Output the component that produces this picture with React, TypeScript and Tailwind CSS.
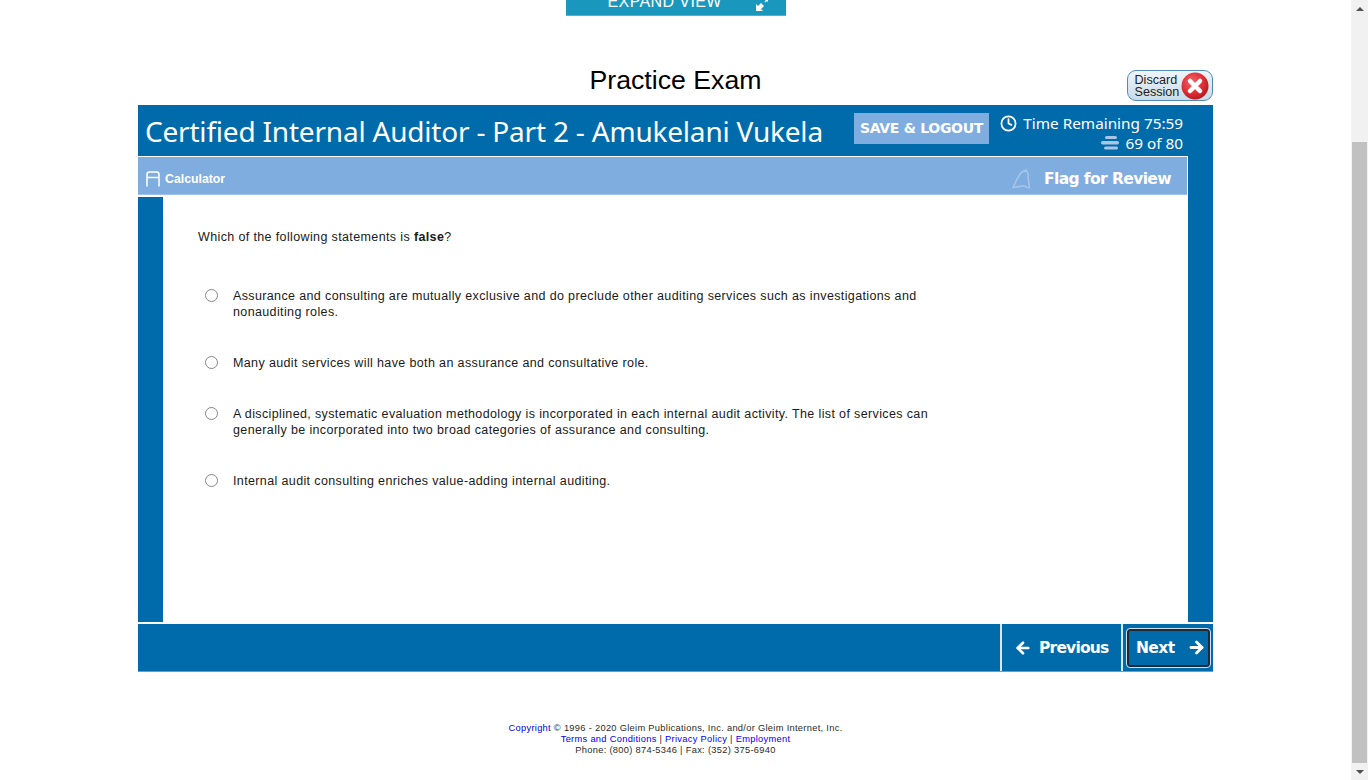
import { ArrowLeft, ArrowRight, Clock } from "lucide-react";

const options = [
  "Assurance and consulting are mutually exclusive and do preclude other auditing services such as investigations and nonauditing roles.",
  "Many audit services will have both an assurance and consultative role.",
  "A disciplined, systematic evaluation methodology is incorporated in each internal audit activity. The list of services can generally be incorporated into two broad categories of assurance and consulting.",
  "Internal audit consulting enriches value-adding internal auditing.",
];

function ExpandIcon() {
  return (
    <svg viewBox="0 0 12 12" className="h-3 w-3 text-white">
      <path d="M0 12V5l2 2 3-3 3 3-3 3 2 2z" fill="currentColor" />
      <path d="M12 0v3l-1-1-1.500 1.500-1-1L10 1 9 0z" fill="currentColor" />
    </svg>
  );
}

function DiscardIcon() {
  return (
    <svg viewBox="0 0 28 28" className="h-[28px] w-[28px] shrink-0">
      <defs>
        <radialGradient id="discard-red" cx="40%" cy="35%" r="70%">
          <stop offset="0%" stopColor="#f2666a" />
          <stop offset="70%" stopColor="#d8262e" />
          <stop offset="100%" stopColor="#a81c22" />
        </radialGradient>
      </defs>
      <circle cx="14" cy="14" r="13.500" fill="url(#discard-red)" />
      <path d="M9 9l10 10M19 9L9 19" stroke="#fff" strokeWidth="4.500" strokeLinecap="round" />
    </svg>
  );
}

function CalculatorIcon() {
  return (
    <svg viewBox="0 0 14 16" className="h-4 w-[14px]" fill="none" stroke="#fff" strokeWidth="1.500">
      <path d="M1 15.500V3.500C1 2 2 1 3.500 1h7C12 1 13 2 13 3.500V15.500" />
      <path d="M1 6.500h12" />
    </svg>
  );
}

function FlagIcon() {
  return (
    <svg viewBox="0 0 20 20" className="h-5 w-5" fill="none" stroke="#a9c6e9" strokeWidth="1.500">
      <path d="M1 18.500 5 10l4-6.500 5-2.500c2 2 2.500 4 2 7l1.500 10.500c-1.500.5-3 0-4-1-2-1-4-.5-6 0-2 .5-4 1-6.500 1z" />
    </svg>
  );
}

function StackIcon() {
  return (
    <svg viewBox="0 0 18 14" className="h-[14px] w-[18px]" fill="#a9c6e9">
      <rect x="4" y="0" width="12" height="3" rx="1.500" />
      <rect x="0" y="5" width="18" height="3.500" rx="1.750" />
      <rect x="3" y="10.500" width="14" height="3" rx="1.500" />
    </svg>
  );
}

export default function App() {
  return (
    <div className="flex h-[780px] w-[1368px] overflow-hidden bg-white font-['Liberation_Sans',sans-serif]">
      <main className="flex w-[1351px] flex-col items-center">
        <div className="flex h-4 w-[220px] items-end border-b border-[#4fb0d0] bg-[#1a97bd] pb-[5px] pl-[42px]">
          <span className="text-[16px] leading-[16px] tracking-[0.4px] whitespace-nowrap text-white">EXPAND VIEW</span>
          <span className="mb-[-1px] ml-[34px]"><ExpandIcon /></span>
        </div>

        <div className="flex h-[89px] w-[1075px] items-end justify-between">
          <div className="w-[86px]" />
          <h1 className="mb-[9px] text-[26.7px] leading-[31px] text-black">Practice Exam</h1>
          <button className="mb-[4px] flex h-[31px] w-[86px] items-center justify-between rounded-[9px] border-[1.5px] border-[#4f8db5] bg-gradient-to-b from-[#f0f4f8] to-[#c8dbea] pr-[3px] pl-[6.5px] text-left text-[12.6px] leading-[12px] text-[#222]">
            <span>Discard<br />Session</span>
            <DiscardIcon />
          </button>
        </div>

        <div className="flex w-[1075px] flex-col">
          <header className="flex h-[51px] items-stretch bg-[#006bab] text-white">
            <div className="ml-[7px] w-[709px] pt-[7px] font-['Noto_Sans',sans-serif] text-[28px] leading-[38px] tracking-[-0.2px] whitespace-nowrap">
              Certified Internal Auditor - Part 2 - Amukelani Vukela
            </div>
            <button className="mt-[8px] h-[31px] w-[135px] bg-[#7fade0] font-['DejaVu_Sans',sans-serif] text-[14px] font-bold tracking-[-0.3px] text-white">
              SAVE &amp; LOGOUT
            </button>
            <div className="flex w-[194px] flex-col items-end pt-[8px] font-['Noto_Sans',sans-serif] text-[15.3px] leading-[20px]">
              <div className="flex items-center gap-[6px]">
                <Clock className="h-[17px] w-[17px]" strokeWidth={2.5} />
                <span>Time Remaining 75:59</span>
              </div>
              <div className="flex items-center gap-[7px]">
                <StackIcon />
                <span>69 of 80</span>
              </div>
            </div>
          </header>

          <div className="flex">
            <div className="flex w-[1050px] flex-col bg-white pt-px pr-px">
              <div className="flex h-[38px] items-center justify-between border-b border-[#a0c2ea] bg-[#7fade0] pt-[7px] pr-[16px] pl-[8px] text-white">
                <div className="flex items-center gap-[5px] text-[12.3px] font-bold">
                  <CalculatorIcon />
                  <span>Calculator</span>
                </div>
                <div className="flex items-center gap-[12px] font-['DejaVu_Sans',sans-serif] text-[15.5px] font-bold tracking-[-0.6px]">
                  <FlagIcon />
                  <span className="mt-[2px]">Flag for Review</span>
                </div>
              </div>
              <div className="mt-[2px] flex h-[425px]">
                <div className="w-[25px] bg-[#006bab]" />
                <div className="flex-1 bg-white pt-[32px] pl-[35px] text-[12.5px] leading-4 tracking-[0.37px] text-[#1a1a1a]">
                  <p>Which of the following statements is <b>false</b>?</p>
                  <ul className="mt-[43px] flex w-[735px] flex-col">
                    {options.map((text, i) => (
                      <li key={i} className="flex h-[67px] items-start even:h-[51px]">
                        <span className="mt-[1px] ml-[7px] h-[13px] w-[13px] shrink-0 rounded-full border border-[#858585] bg-white" />
                        <span className="ml-[15px] w-[695px]">{text}</span>
                      </li>
                    ))}
                  </ul>
                </div>
              </div>
            </div>
            <div className="w-[25px] bg-[#006bab]" />
          </div>

          <footer className="mt-[2px] flex h-[48px] justify-end border-b border-[#5da3cc] bg-[#006bab] text-white">
            <button className="flex w-[121px] items-center gap-[7px] border-l-2 border-[#d8e8f2] pl-[12px] font-['DejaVu_Sans',sans-serif] text-[15.5px] font-bold tracking-[-0.8px]">
              <ArrowLeft className="h-[18px] w-[18px]" strokeWidth={3.5} />
              <span className="mt-[2px]">Previous</span>
            </button>
            <div className="flex w-[92px] items-center border-l-2 border-[#d8e8f2] pl-[4px]">
              <button className="flex h-[38px] w-[83px] items-center justify-between rounded-[3px] border-2 border-[#1c2a38] pr-[2px] pl-[7px] font-['DejaVu_Sans',sans-serif] text-[15.5px] font-bold tracking-[-0.6px] outline outline-1 outline-[#cfe0ee]">
                <span className="mt-[2px]">Next</span>
                <ArrowRight className="h-[19px] w-[19px]" strokeWidth={3.5} />
              </button>
            </div>
          </footer>
        </div>

        <div className="mt-[51px] text-center text-[9.3px] leading-[11px] tracking-[0.3px] text-[#2a2a2a]">
          <p><a className="text-[#0000ee]">Copyright</a> © 1996 - 2020 Gleim Publications, Inc. and/or Gleim Internet, Inc.</p>
          <p>
            <a className="text-[#0000ee]">Terms and Conditions</a> | <a className="text-[#0000ee]">Privacy Policy</a> | <a className="text-[#0000ee]">Employment</a>
          </p>
          <p>Phone: (800) 874-5346 | Fax: (352) 375-6940</p>
        </div>
      </main>

      <aside className="flex w-[17px] flex-col items-center bg-[#f1f1f1]">
        <div className="mt-[7px] h-0 w-0 border-x-[4px] border-b-[4px] border-x-transparent border-b-[#505050]" />
        <div className="mt-[131px] h-[621px] w-[15px] bg-[#c1c1c1]" />
        <div className="mt-[7px] h-0 w-0 border-x-[4px] border-t-[4px] border-x-transparent border-t-[#505050]" />
      </aside>
    </div>
  );
}
